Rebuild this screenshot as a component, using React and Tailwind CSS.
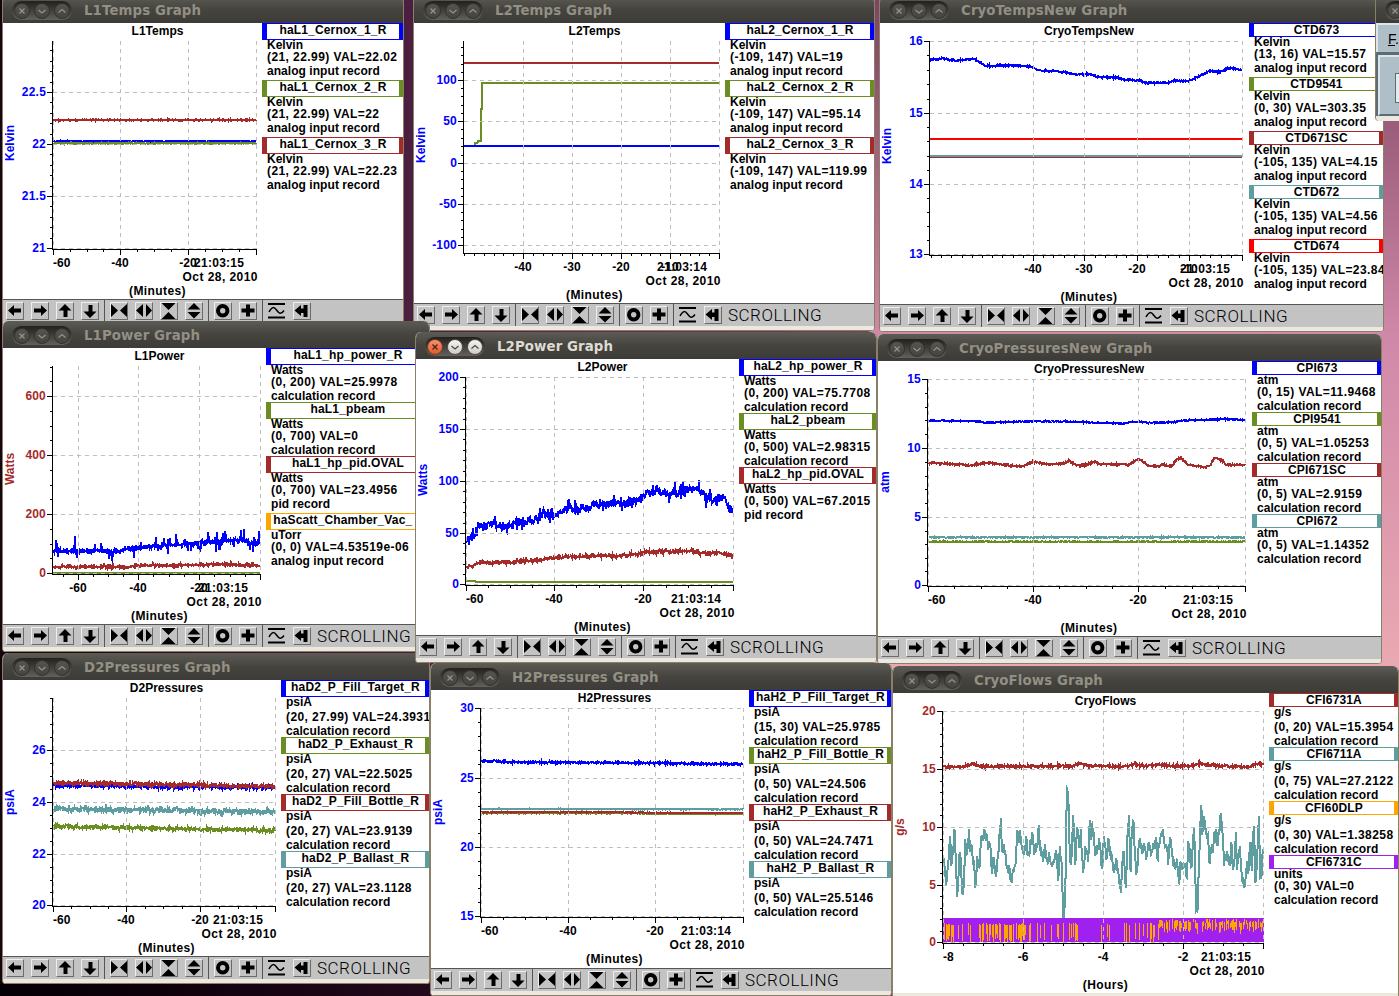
import React from 'react';

const BLUE = '#0000ff';
const GREEN = '#6b8e23';
const BROWN = '#a52a2a';
const TEAL = '#5f9ea0';
const RED = '#ff0000';
const ORANGE = '#ffa500';
const PURPLE = '#a020f0';

// Small seeded generator so the traces look the same on every load
const makeRandom = (seed) => {
  let s = seed;
  return () => {
    s = (s * 1664525 + 1013904223) % 4294967296;
    return s / 4294967296;
  };
};

// "x,y x,y" in thirds of a pixel, relative to the graph's origin
const toPoints = (text, [ox, oy]) =>
  text.split(' ').map((pair) => {
    const [x, y] = pair.split(',').map(Number);
    return [ox + x / 3, oy + y / 3];
  });

const FLOW_TRACE =
  '160,590 166,630 170,678 176,590 180,530 184,600 190,560 195,500 198,640 203,706 208,600 212,580 216,698 222,660 226,540 232,600 237,492 240,590 246,560 250,600 256,672 262,600 270,620 272,550 276,530 285,516 292,545 302,570 306,640 312,600 318,655 323,590 333,492 336,590 345,560 350,620 358,640 365,660 372,620 378,600 382,498 386,545 392,520 397,560 404,600 410,535 414,590 420,560 430,528 434,590 440,560 447,515 452,570 460,590 466,560 470,610 480,585 485,628 492,590 498,580 505,655 510,560 516,600 519,775 524,772 525,620 527,700 530,377 535,410 540,600 545,590 550,475 556,610 562,505 568,560 573,520 580,655 586,560 595,590 600,480 604,520 608,500 614,560 620,570 628,530 632,580 637,640 642,530 650,600 655,530 660,575 666,600 672,635 680,590 686,650 693,683 700,560 708,688 712,530 717,468 722,640 726,500 732,490 735,600 740,640 745,575 750,520 756,590 762,555 770,600 776,525 782,590 790,570 798,540 803,595 810,545 818,512 824,550 830,560 835,595 842,540 850,600 856,620 862,600 867,670 872,600 880,620 884,600 890,665 896,540 902,600 905,640 912,485 915,600 919,755 923,745 926,640 930,520 933,433 938,520 943,475 950,540 955,525 957,630 966,545 970,560 975,505 980,560 985,540 993,465 998,530 1004,610 1010,570 1018,620 1024,560 1030,635 1038,535 1042,610 1050,560 1055,650 1064,690 1070,610 1076,650 1081,540 1086,630 1092,480 1096,660 1102,600 1107,470 1110,640 1114,660 1119,560';

const GRAPHS = [
  {
    name: 'L1Temps', box: [3, -4, 400, 331], legendX: 262, status: '',
    plot: {
      left: 52.5, top: 41, bottom: 249.5, right: 256.5, center: 157.5, unit: 'Kelvin', unitY: 143, color: BLUE, time: '21:03:15', span: '(Minutes)', origin: [0, 0],
      xs: [[53.5, '-60'], [120.5, '-40'], [188.5, '-20'], [256.5, '']], xMinor: 4,
      ys: [[92.5, '22.5'], [144.5, '22'], [196.5, '21.5'], [248.5, '21']], yMinor: 5,
      traces: [
        { color: BROWN, pts: '160,360 770,360', amp: 0.9 },
        { color: BLUE, pts: '160,424 770,424', amp: 0.55 },
        { color: GREEN, pts: '160,430 770,430', amp: 0.7 },
      ],
    },
    legend: [
      ['haL1_Cernox_1_R', BLUE, 'Kelvin', '(21, 22.99) VAL=22.02', 'analog input record'],
      ['haL1_Cernox_2_R', GREEN, 'Kelvin', '(21, 22.99) VAL=22', 'analog input record'],
      ['haL1_Cernox_3_R', BROWN, 'Kelvin', '(21, 22.99) VAL=22.23', 'analog input record'],
    ],
  },
  {
    name: 'L2Temps', box: [414, -4, 460, 335], legendX: 725, status: 'SCROLLING',
    plot: {
      left: 463.5, top: 41, bottom: 253.5, right: 719.5, center: 594.5, unit: 'Kelvin', unitY: 145, color: BLUE, time: '21:03:14', span: '(Minutes)', origin: [410, 0],
      xs: [[523.5, '-40'], [572.5, '-30'], [621.5, '-20'], [670.5, '-10'], [719.5, '']], xMinor: 5,
      ys: [[80.5, '100'], [121.5, '50'], [163.5, '0'], [204.5, '-50'], [245.5, '-100']], yMinor: 5,
      traces: [
        { color: GREEN, pts: '194,436 196,430 202,430 204,424 213,422 213,328 217,328 217,249 928,249', amp: 0 },
        { color: BLUE, pts: '163,438 928,438', amp: 0 },
        { color: BROWN, pts: '163,189 928,189', amp: 0 },
      ],
    },
    legend: [
      ['haL2_Cernox_1_R', BLUE, 'Kelvin', '(-109, 147) VAL=19', 'analog input record'],
      ['haL2_Cernox_2_R', GREEN, 'Kelvin', '(-109, 147) VAL=95.14', 'analog input record'],
      ['haL2_Cernox_3_R', BROWN, 'Kelvin', '(-109, 147) VAL=119.99', 'analog input record'],
    ],
  },
  {
    name: 'CryoTempsNew', box: [880, -4, 503, 336], legendX: 1249, status: 'SCROLLING',
    plot: {
      left: 929.5, top: 41, bottom: 255.5, right: 1242.5, center: 1089, unit: 'Kelvin', unitY: 146, color: BLUE, time: '21:03:15', span: '(Minutes)', origin: [875, 0],
      xs: [[1033.5, '-40'], [1084.5, '-30'], [1137.5, '-20'], [1189.5, '-10'], [1242.5, '']], xMinor: 5,
      ys: [[41.5, '16'], [113.5, '15'], [184.5, '14'], [254.5, '13']], yMinor: 5,
      traces: [
        { color: BROWN, pts: '163,471 1102,471', amp: 0 },
        { color: TEAL, pts: '163,468 1102,468', amp: 0 },
        { color: RED, pts: '163,417 1102,417', amp: 0 },
        { color: BLUE, pts: '163,180 200,176 240,181 300,176 330,198 400,196 465,199 495,212 550,214 600,223 645,222 670,231 730,233 750,240 790,240 810,248 880,248 905,240 925,245 950,240 1005,212 1035,217 1060,205 1075,206 1102,211', amp: 1.1 },
      ],
    },
    legend: [
      ['CTD673', BLUE, 'Kelvin', '(13, 16) VAL=15.57', 'analog input record'],
      ['CTD9541', GREEN, 'Kelvin', '(0, 30) VAL=303.35', 'analog input record'],
      ['CTD671SC', BROWN, 'Kelvin', '(-105, 135) VAL=4.15', 'analog input record'],
      ['CTD672', TEAL, 'Kelvin', '(-105, 135) VAL=4.56', 'analog input record'],
      ['CTD674', RED, 'Kelvin', '(-105, 135) VAL=23.84', 'analog input record'],
    ],
  },
  {
    name: 'L1Power', box: [3, 321, 426, 331], legendX: 266, status: 'SCROLLING',
    plot: {
      left: 52.5, top: 366, bottom: 574.5, right: 260.5, center: 159.5, unit: 'Watts', unitY: 469, color: BROWN, time: '21:03:15', span: '(Minutes)', origin: [0, 320],
      xs: [[78.5, '-60'], [138.5, '-40'], [199.5, '-20'], [260.5, '']], xMinor: 4,
      ys: [[396.5, '600'], [455.5, '400'], [514.5, '200'], [573.5, '0']], yMinor: 4,
      traces: [
        { color: GREEN, pts: '160,759 780,759', amp: 0 },
        { color: BROWN, pts: '160,741 380,741 440,736 560,736 640,733 780,736', amp: 1.3, spike: 3 },
        { color: BLUE, pts: '160,692 360,693 380,686 430,683 470,678 560,674 600,668 680,662 740,662 779,674', amp: 2.2, spike: 12, seed: 4242 },
      ],
    },
    legend: [
      ['haL1_hp_power_R', BLUE, 'Watts', '(0, 200) VAL=25.9978', 'calculation record'],
      ['haL1_pbeam', GREEN, 'Watts', '(0, 700) VAL=0', 'calculation record'],
      ['haL1_hp_pid.OVAL', BROWN, 'Watts', '(0, 700) VAL=23.4956', 'pid record'],
      ['haScatt_Chamber_Vac_\u00a0\u00a0\u00a0', ORANGE, 'uTorr', '(0, 0) VAL=4.53519e-06', 'analog input record'],
    ],
  },
  {
    name: 'CryoPressuresNew', box: [878, 334, 503, 330], legendX: 1252, status: 'SCROLLING',
    plot: {
      left: 927.5, top: 379, bottom: 586.5, right: 1245.5, center: 1089, unit: 'atm', unitY: 482, color: BLUE, time: '21:03:15', span: '(Minutes)', origin: [875, 330],
      xs: [[928.5, '-60'], [1033.5, '-40'], [1138.5, '-20'], [1245.5, '']], xMinor: 4,
      ys: [[379.5, '15'], [448.5, '10'], [517.5, '5'], [585.5, '0']], yMinor: 5,
      traces: [
        { color: TEAL, pts: '162,622 1110,622', amp: 0.7 },
        { color: GREEN, pts: '162,635 1110,635', amp: 0.6 },
        { color: BROWN, pts: '162,398 200,400 290,406 340,398 380,404 440,409 475,396 520,403 560,402 585,393 605,407 630,405 660,394 670,402 760,404 792,386 820,408 850,408 865,403 890,410 905,388 918,384 940,404 990,412 1005,408 1018,384 1035,388 1055,404 1110,405', amp: 1.1 },
        { color: BLUE, pts: '162,272 300,273 330,278 470,274 600,275 740,281 780,275 830,278 890,277 920,272 1050,267 1110,270', amp: 0.7 },
      ],
    },
    legend: [
      ['CPI673', BLUE, 'atm', '(0, 15) VAL=11.9468', 'calculation record'],
      ['CPI9541', GREEN, 'atm', '(0, 5) VAL=1.05253', 'calculation record'],
      ['CPI671SC', BROWN, 'atm', '(0, 5) VAL=2.9159', 'calculation record'],
      ['CPI672', TEAL, 'atm', '(0, 5) VAL=1.14352', 'calculation record'],
    ],
  },
  {
    name: 'D2Pressures', box: [3, 653, 426, 331], legendX: 281, status: 'SCROLLING',
    plot: {
      left: 52.5, top: 698, bottom: 906.5, right: 275.5, center: 166.5, unit: 'psiA', unitY: 802, color: BLUE, time: '21:03:15', span: '(Minutes)', origin: [0, 650],
      xs: [[53.5, '-60'], [126.5, '-40'], [200.5, '-20'], [275.5, '']], xMinor: 4,
      ys: [[750.5, '26'], [802.5, '24'], [854.5, '22'], [905.5, '20']], yMinor: 4,
      traces: [
        { color: BLUE, pts: '160,407 400,408 500,411 826,412', amp: 2 },
        { color: BROWN, pts: '160,399 400,402 600,405 826,410', amp: 2.4 },
        { color: TEAL, pts: '160,477 400,480 600,483 826,486', amp: 3.4, spike: 2.5 },
        { color: GREEN, pts: '160,529 300,531 500,536 826,541', amp: 2.4 },
      ],
    },
    legend: [
      ['haD2_P_Fill_Target_R', BLUE, 'psiA', '(20, 27.99) VAL=24.3931', 'calculation record'],
      ['haD2_P_Exhaust_R', GREEN, 'psiA', '(20, 27) VAL=22.5025', 'calculation record'],
      ['haD2_P_Fill_Bottle_R', BROWN, 'psiA', '(20, 27) VAL=23.9139', 'calculation record'],
      ['haD2_P_Ballast_R', TEAL, 'psiA', '(20, 27) VAL=23.1128', 'calculation record'],
    ],
  },
  {
    name: 'H2Pressures', box: [431, 663, 460, 333], legendX: 749, status: 'SCROLLING',
    plot: {
      left: 480.5, top: 708, bottom: 917.5, right: 743.5, center: 614.5, unit: 'psiA', unitY: 812, color: BLUE, time: '21:03:14', span: '(Minutes)', origin: [428, 660],
      xs: [[481.5, '-60'], [568.5, '-40'], [655.5, '-20'], [743.5, '']], xMinor: 4,
      ys: [[708.5, '30'], [778.5, '25'], [847.5, '20'], [916.5, '15']], yMinor: 5,
      traces: [
        { color: GREEN, pts: '160,460 520,460 946,462', amp: 0.4 },
        { color: BROWN, pts: '160,457 520,457 946,459', amp: 0.4 },
        { color: TEAL, pts: '160,447 946,448', amp: 0.5 },
        { color: BLUE, pts: '160,303 300,307 600,308 946,313', amp: 1.3 },
      ],
    },
    legend: [
      ['haH2_P_Fill_Target_R', BLUE, 'psiA', '(15, 30) VAL=25.9785', 'calculation record'],
      ['haH2_P_Fill_Bottle_R', GREEN, 'psiA', '(0, 50) VAL=24.506', 'calculation record'],
      ['haH2_P_Exhaust_R', BROWN, 'psiA', '(0, 50) VAL=24.7471', 'calculation record'],
      ['haH2_P_Ballast_R', TEAL, 'psiA', '(0, 50) VAL=25.5146', 'calculation record'],
    ],
  },
  {
    name: 'CryoFlows', box: [893, 666, 505, 333], legendX: 1269, status: null,
    plot: {
      left: 942.5, top: 711, bottom: 943.5, right: 1263.5, center: 1105.5, unit: 'g/s', unitY: 827, color: BROWN, time: '21:03:15', span: '(Hours)', origin: [890, 660],
      xs: [[943.5, '-8'], [1023.5, '-6'], [1103.5, '-4'], [1183.5, '-2'], [1263.5, '']], xMinor: 4,
      ys: [[711.5, '20'], [769.5, '15'], [827.5, '10'], [885.5, '5'], [942.5, '0']], yMinor: 5,
      traces: [
        { color: BROWN, pts: '160,320 220,320 245,312 270,319 550,318 575,310 590,318 715,319 735,311 750,318 810,314 850,319 910,318 930,310 960,317 1080,320 1100,311 1122,313', amp: 1.7 },
        { color: TEAL, pts: FLOW_TRACE, amp: 9 },
      ],
      flowBand: true,
    },
    legend: [
      ['CFI6731A', BROWN, 'g/s', '(0, 20) VAL=15.3954', 'calculation record'],
      ['CFI6711A', TEAL, 'g/s', '(0, 75) VAL=27.2122', 'calculation record'],
      ['CFI60DLP', ORANGE, 'g/s', '(0, 30) VAL=1.38258', 'calculation record'],
      ['CFI6731C', PURPLE, 'units', '(0, 30) VAL=0', 'calculation record'],
    ],
  },
  {
    name: 'L2Power', box: [416, 332, 460, 331], legendX: 739, status: 'SCROLLING', active: true,
    plot: {
      left: 465.5, top: 377, bottom: 585.5, right: 733.5, center: 602.5, unit: 'Watts', unitY: 480, color: BLUE, time: '21:03:14', span: '(Minutes)', origin: [412, 330],
      xs: [[466.5, '-60'], [554.5, '-40'], [643.5, '-20'], [733.5, '']], xMinor: 4,
      ys: [[377.5, '200'], [429.5, '150'], [481.5, '100'], [533.5, '50'], [584.5, '0']], yMinor: 5,
      traces: [
        { color: GREEN, pts: '163,753 190,753 192,756 963,756', amp: 0 },
        { color: BROWN, pts: '163,710 190,705 200,698 300,697 380,690 460,680 600,677 680,674 700,666 830,662 880,672 930,668 963,678', amp: 2, spike: 2.5 },
        { color: BLUE, pts: '163,632 175,620 190,610 200,585 220,592 240,578 260,588 290,588 320,575 350,574 380,570 395,550 420,560 450,550 470,528 500,540 530,530 550,520 580,530 610,515 650,520 690,508 700,492 740,486 790,490 830,477 860,480 880,500 900,513 935,498 950,530 963,545', amp: 5.5, spike: 8, seed: 9001 },
      ],
    },
    legend: [
      ['haL2_hp_power_R', BLUE, 'Watts', '(0, 200) VAL=75.7708', 'calculation record'],
      ['haL2_pbeam', GREEN, 'Watts', '(0, 500) VAL=2.98315', 'calculation record'],
      ['haL2_hp_pid.OVAL', BROWN, 'Watts', '(0, 500) VAL=67.2015', 'pid record'],
    ],
  },
];

const tracePath = (trace, origin, seed) => {
  const points = toPoints(trace.pts, origin);
  if (!trace.amp) {
    return 'M' + points.map(([x, y]) => `${x.toFixed(1)} ${y.toFixed(1)}`).join('L');
  }
  const random = makeRandom(trace.seed || seed);
  const out = [];
  let i = 0;
  const end = points[points.length - 1][0];
  for (let x = points[0][0]; x <= end; x += 0.5) {
    while (i < points.length - 2 && points[i + 1][0] < x) i++;
    const [ax, ay] = points[i];
    const [bx, by] = points[i + 1];
    let y = ay + ((by - ay) * (x - ax)) / (bx - ax);
    y += (random() + random() - 1) * trace.amp;
    if (trace.spike && random() < 0.15) {
      y += (random() - 0.55) * 2 * trace.spike;
    }
    out.push(`${x.toFixed(1)} ${y.toFixed(1)}`);
  }
  return 'M' + out.join('L');
};

// Minor ticks between the majors, carried on to both ends of the axis
const minorTicks = (majors, count, from, to) => {
  const step = (majors[1] - majors[0]) / count;
  const ticks = [];
  for (let v = majors[0] - step; v >= from; v -= step) ticks.push(v);
  majors.forEach((m, i) => {
    const gap = i < majors.length - 1 ? (majors[i + 1] - m) / count : step;
    for (let k = 1; k < count; k++) {
      if (m + gap * k <= to) ticks.push(m + gap * k);
    }
  });
  return ticks.map((v) => Math.floor(v) + 0.5);
};

const FlowBand = () => {
  const random = makeRandom(77);
  const density = (x) => {
    if (x < 954) return 0.6;
    if (x < 979) return 0.2;
    if (x < 1032) return 0.6;
    if (x < 1066) return 0.25;
    if (x < 1086) return 0.5;
    if (x < 1101) return 0;
    if (x < 1110) return 0.4;
    if (x < 1124) return 0.05;
    if (x < 1158) return 0.4;
    return 0.68;
  };
  const bars = [];
  for (let x = 944; x < 1263; x++) {
    if (random() > density(x)) continue;
    const late = x > 1158;
    const top = (late ? 919 : 923) + Math.floor(random() * (late ? 5 : 3));
    const bottom = late ? top + 3 + Math.floor(random() * 9) : 942 - Math.floor(random() * random() * 10);
    bars.push(<rect key={x} x={x} y={top} width={1} height={bottom - top} fill={ORANGE} />);
  }
  return (
    <g>
      <rect x={943} y={918} width={321} height={24} fill={PURPLE} />
      {bars}
    </g>
  );
};

const Plot = ({ name, plot, x, y, width, height }) => {
  const { left, top, bottom, right, center } = plot;
  const xMajor = plot.xs.map((t) => t[0]);
  const yMajor = plot.ys.map((t) => t[0]);
  return (
    <svg
      width={width}
      height={height}
      viewBox={`${x} ${y} ${width} ${height}`}
      className="shrink-0 font-['Liberation_Sans',Arial,sans-serif] text-[12px] font-bold"
    >
      <text x={center} y={y + 12.3} textAnchor="middle">{name}</text>
      <text
        transform={`translate(${x + 11} ${plot.unitY}) rotate(-90)`}
        textAnchor="middle"
        fill={plot.color}
      >
        {plot.unit}
      </text>

      <g shapeRendering="crispEdges" fill="none">
        {plot.traces.map((t, i) => (
          <path key={i} d={tracePath(t, plot.origin, 31 + i * 97)} stroke={t.color} strokeWidth={2} />
        ))}
        {plot.flowBand && <FlowBand />}
        <g stroke="#bebebe" strokeDasharray="4 4">
          {xMajor.map((v) => <path key={v} d={`M${v} ${top}V${bottom}`} />)}
          {yMajor.map((v) => <path key={v} d={`M${left} ${v}H${right}`} />)}
        </g>
        <g stroke="#000">
          <path d={`M${left} ${top}V${bottom}`} />
          <path d={`M${left} ${bottom}H${right + 0.5}`} />
          {xMajor.map((v) => <path key={v} d={`M${v} ${bottom}v5`} />)}
          {yMajor.map((v) => <path key={v} d={`M${left} ${v}h-5.5`} />)}
          {minorTicks(xMajor, plot.xMinor, left, right).map((v) => (
            <path key={v} d={`M${v} ${bottom}v2.5`} />
          ))}
          {minorTicks(yMajor, plot.yMinor, top, bottom).map((v) => (
            <path key={v} d={`M${left} ${v}h-2.5`} />
          ))}
        </g>
      </g>

      {plot.ys.map(([v, label]) => (
        <text key={label} x={left - 6.5} y={v + 3.5} textAnchor="end" fill={plot.color} letterSpacing="0.2">{label}</text>
      ))}
      {plot.xs.map(([v, label]) =>
        v - left < 3 ? (
          <text key={label} x={v - 0.5} y={bottom + 17.5}>{label}</text>
        ) : (
          <text key={label} x={v - 0.5} y={bottom + 17.5} textAnchor="middle">{label}</text>
        )
      )}
      <text x={right - 62.5} y={bottom + 17.5} textLength={50}>{plot.time}</text>
      <text x={right - 74} y={bottom + 31} textLength={75}>Oct 28, 2010</text>
      <text x={center} y={bottom + 45.5} textAnchor="middle" letterSpacing="0.4">{plot.span}</text>
    </svg>
  );
};

// Lines without descenders are packed three pixels tighter
const lineClass = (text) =>
  /[gjpqy_(,/]/.test(text) ? 'h-[14px] leading-[13px]' : 'h-[11px] leading-[13px]';

const LINE_SPACING = ['-mt-px mb-px tracking-normal', 'tracking-[0.42px]', 'tracking-[0.05px]'];

const Legend = ({ entries }) => (
  <div className="flex min-w-0 flex-1 flex-col overflow-hidden whitespace-nowrap text-[12px] font-bold text-black">
    {entries.map(([label, color, ...lines]) => (
      <div key={label} className="mb-px flex flex-col">
        <div
          className="flex flex-col border-y border-r-4 border-l-5 pb-px"
          style={{ borderColor: color }}
        >
          <div className={`flex justify-center tracking-[0.15px] ${lineClass(label)}`}>{label}</div>
        </div>
        {lines.map((line, i) => (
          <div key={line} className={`pl-[5px] ${LINE_SPACING[i]} ${lineClass(line)}`}>{line}</div>
        ))}
      </div>
    ))}
  </div>
);

const ICONS = {
  left: <path d="M2 8.5 8 3v3.5h7v4H8V14z" />,
  right: <path d="M16 8.5 10 3v3.5H3v4h7V14z" />,
  up: <path d="M9 2 15.5 8.5h-4V15h-4V8.5h-5z" />,
  down: <path d="M9 16 2.5 9.5h5V3h4v6.5h4z" />,
  zoomInX: <path d="M1 2v13l7-6.5zM17 2v13l-7-6.5z" />,
  zoomOutX: <path d="M1 8.5 8 2v13zM17 8.5 11 2v13z" />,
  zoomInY: <path d="M1.5 1h14l-7 7zM1.5 17h14l-7-7z" />,
  zoomOutY: <path d="M9 1 15.5 7.5h-13zM9 16.5 15.5 10h-13z" />,
  reset: <circle cx="8.7" cy="8.7" r="4.7" fill="none" stroke="#000" strokeWidth="4" />,
  plus: <path d="M7 2.5h4v4h4.5v4H11v4H7v-4H2.5v-4H7z" />,
  wave: (
    <g>
      <path d="M0 1h17v2H0zM0 14.5h17v2H0z" />
      <path d="M1 10C4 4.5 6 4.5 8.5 8S13 13 16 8.5" fill="none" stroke="#000" strokeWidth="1.5" />
    </g>
  ),
  scroll: <path d="M1.5 8.5 8 3v3.5h2.500V3h4v12h-4v-4H8v3z" />,
};

const GROUPS = [
  ['left', 'right', 'up', 'down'],
  ['zoomInX', 'zoomOutX', 'zoomInY', 'zoomOutY'],
  ['reset', 'plus'],
  ['wave', 'scroll'],
];

const Toolbar = ({ status }) => (
  <div className="flex h-[23px] shrink-0 items-stretch border-t border-[#555] bg-[#c3c3c3]">
    {GROUPS.map((group, i) => (
      <div
        key={i}
        className={`flex gap-[7px] pt-0.5 ${i === 0 ? 'pl-[3px] pr-[5px]' : 'border-l border-[#555] px-[5px]'}`}
      >
        {group.map((icon) => (
          <button
            key={icon}
            className={`block size-[18px] border bg-[#c3c3c3] ${icon === 'wave' ? 'border-[#c3c3c3]' : 'border-t-[#eee] border-r-[#6b6b6b] border-b-[#6b6b6b] border-l-[#eee]'}`}
          >
            <svg width="18" height="18" viewBox="0 0 18 18" className="-m-px block max-w-none">{ICONS[icon]}</svg>
          </button>
        ))}
      </div>
    ))}
    {status && (
      <span className="pl-px font-['Roboto','Liberation_Sans',sans-serif] text-[17px] leading-[22px] font-light tracking-[0.5px] text-black">{status}</span>
    )}
  </div>
);

const WindowButton = ({ shape, active }) => {
  const tone = !active
    ? 'bg-linear-to-b from-[#55544e] to-[#454440] border-[#33322e] text-[#96938a]'
    : shape === 'close'
      ? 'bg-linear-to-b from-[#f4916c] to-[#e0582c] border-[#7a3a22] text-[#4a2416]'
      : 'bg-linear-to-b from-[#f6f4f0] to-[#cfccc4] border-[#55534c] text-[#4a4842]';
  const d = { close: 'M4.5 4.5l5 5M9.5 4.5l-5 5', min: 'M3.5 6l3.5 3 3.5-3', max: 'M3.5 8.500l3.5-3 3.5 3' }[shape];
  return (
    <span className={`flex size-4 items-center justify-center rounded-full border ${tone}`}>
      <svg width="14" height="14" viewBox="0 0 14 14" className="shrink-0">
        <path d={d} fill="none" stroke="currentColor" strokeWidth="1.2" />
      </svg>
    </span>
  );
};

const TitleBar = ({ title, active }) => (
  <div className="flex h-[27px] shrink-0 items-center overflow-hidden rounded-t-[5px] bg-linear-to-b from-[#5c5b54] via-[#45443f] to-[#3c3b37] pt-0.5 pl-[9px]">
    <div className="flex h-[19px] shrink-0 items-center gap-1 rounded-full bg-linear-to-b from-[#22211e] to-[#62615b] px-0.5">
      <WindowButton shape="close" active={active} />
      <WindowButton shape="min" active={active} />
      <WindowButton shape="max" active={active} />
    </div>
    <span
      className={`ml-3 font-['DejaVu_Sans',sans-serif] text-[13.33px] leading-none font-bold tracking-[0.1px] whitespace-nowrap ${active ? 'text-[#dfdbd2]' : 'text-[#938f84]'}`}
    >
      {title}
    </span>
  </div>
);

const GraphWindow = ({ graph }) => {
  const [x, y, width, height] = graph.box;
  const hasToolbar = graph.status !== null;
  const bodyHeight = height - 27 - (hasToolbar ? 28 : 6);
  return (
    <div
      className="absolute flex flex-col overflow-hidden rounded-t-md rounded-b border-x border-[#8a8068] bg-[#ece8e0]"
      style={{ left: x - 1, top: y, width: width + 2, height }}
    >
      <TitleBar title={`${graph.name} Graph`} active={graph.active} />
      <div className="flex bg-white" style={{ height: bodyHeight }}>
        <Plot
          name={graph.name}
          plot={graph.plot}
          x={x}
          y={y + 27}
          width={graph.legendX - x}
          height={bodyHeight}
        />
        <Legend entries={graph.legend} />
      </div>
      {hasToolbar && <Toolbar status={graph.status} />}
      <div className="flex-1 border-b border-[#8a8068]" />
    </div>
  );
};

const MenuWindow = () => (
  <div className="absolute top-[-4px] left-[1375px] flex h-[125px] w-10 flex-col overflow-hidden rounded-b border-x border-[#8a8068] bg-[#ece8e0]">
    <TitleBar title="" />
    <div className="flex h-[29px] shrink-0 border-t-2 border-l-2 border-[#dbe5ea] bg-[#aebfc8] pt-[7px] pl-[10px]">
      <span className="font-['Liberation_Sans',sans-serif] text-[14px] leading-[15px] text-black">
        <u>F</u>.
      </span>
    </div>
    <div className="flex flex-col border-t-3 border-l-2 border-[#5f6b73]">
      <div className="flex h-[61px] shrink-0 border-t-2 border-b-2 border-l-2 border-t-[#dbe5ea] border-b-[#5f6b73] border-l-[#dbe5ea] bg-[#aebfc8] pt-4 pl-[15px]">
        <div className="h-[30px] w-5 border border-[#5f6b73] bg-[#e4ebef]" />
      </div>
    </div>
  </div>
);

export default function App() {
  return (
    <div className="relative h-[996px] w-[1399px] overflow-hidden bg-linear-to-r from-[#16040f] via-[#4d1f42] via-30% to-[#b06a8c] font-['Liberation_Sans',Arial,sans-serif]">
      <div className="absolute right-0 top-0 h-[670px] w-[530px] bg-linear-to-b from-[#7c4561] via-[#d088a8] via-50% to-[#eaa9b2]" />
      <div className="absolute bottom-0 left-0 h-3 w-[431px] bg-linear-to-r from-[#050005] to-[#23091b]" />
      {GRAPHS.map((graph) => (
        <GraphWindow key={graph.name} graph={graph} />
      ))}
      <MenuWindow />
    </div>
  );
}
